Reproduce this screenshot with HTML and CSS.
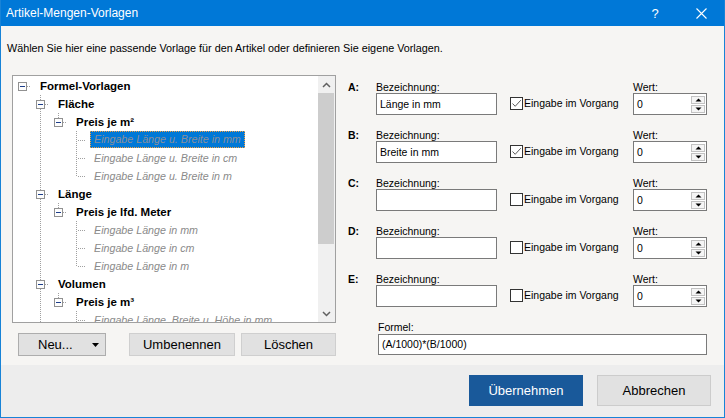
FILE: index.html
```html
<!DOCTYPE html>
<html lang="de">
<head>
<meta charset="utf-8">
<title>Artikel-Mengen-Vorlagen</title>
<link rel="stylesheet" href="styles.css">
</head>
<body>
<svg class="defs" width="0" height="0" aria-hidden="true">
  <defs>
    <symbol id="boxR" viewBox="0 0 18 18">
      <path d="M14 9.5H18" stroke="#a0a0a0" stroke-dasharray="1 1"/>
      <rect x="5.5" y="5.5" width="8" height="8" fill="#fdfdfd" stroke="#919191"/>
      <path d="M7 9.5h5" stroke="#1c3e8a"/>
    </symbol>
    <symbol id="boxUD" viewBox="0 0 18 18">
      <path d="M9.5 0V5M9.5 14V18M14 9.5H18" stroke="#a0a0a0" stroke-dasharray="1 1"/>
      <rect x="5.5" y="5.5" width="8" height="8" fill="#fdfdfd" stroke="#919191"/>
      <path d="M7 9.5h5" stroke="#1c3e8a"/>
    </symbol>
    <symbol id="boxU" viewBox="0 0 18 18">
      <path d="M9.5 0V5M14 9.5H18" stroke="#a0a0a0" stroke-dasharray="1 1"/>
      <rect x="5.5" y="5.5" width="8" height="8" fill="#fdfdfd" stroke="#919191"/>
      <path d="M7 9.5h5" stroke="#1c3e8a"/>
    </symbol>
    <symbol id="vl" viewBox="0 0 18 18">
      <path d="M9.5 0V18" stroke="#a0a0a0" stroke-dasharray="1 1"/>
    </symbol>
    <symbol id="leafM" viewBox="0 0 18 18">
      <path d="M9.5 0V18M11 9.5H18" stroke="#a0a0a0" stroke-dasharray="1 1"/>
    </symbol>
    <symbol id="leafL" viewBox="0 0 18 18">
      <path d="M9.5 0V10M11 9.5H18" stroke="#a0a0a0" stroke-dasharray="1 1"/>
    </symbol>
  </defs>
</svg>

<div class="win">
  <div class="titlebar">
    <span class="title">Artikel-Mengen-Vorlagen</span>
    <span class="tbtn help">?</span>
    <span class="tbtn close">
      <svg width="11" height="11" viewBox="0 0 11 11"><path d="M0.5 0.5L10.5 10.5M10.5 0.5L0.5 10.5" stroke="#fff" stroke-width="1.1"/></svg>
    </span>
  </div>

  <div class="content">
    <div class="desc">Wählen Sie hier eine passende Vorlage für den Artikel oder definieren Sie eigene Vorlagen.</div>
    <div class="main">
      <div class="leftcol">
        <div class="tree">
          <div class="tree-list">
            <div class="node"><svg class="ic"><use href="#boxR"/></svg><span class="lbl b">Formel-Vorlagen</span></div>
            <div class="node"><span class="sp"></span><svg class="ic"><use href="#boxUD"/></svg><span class="lbl b">Fläche</span></div>
            <div class="node"><span class="sp"></span><svg class="ic"><use href="#vl"/></svg><svg class="ic"><use href="#boxU"/></svg><span class="lbl b">Preis je m²</span></div>
            <div class="node"><span class="sp"></span><svg class="ic"><use href="#vl"/></svg><span class="sp"></span><svg class="ic"><use href="#leafM"/></svg><span class="lbl leaf sel">Eingabe Länge u. Breite in mm</span></div>
            <div class="node"><span class="sp"></span><svg class="ic"><use href="#vl"/></svg><span class="sp"></span><svg class="ic"><use href="#leafM"/></svg><span class="lbl leaf">Eingabe Länge u. Breite in cm</span></div>
            <div class="node"><span class="sp"></span><svg class="ic"><use href="#vl"/></svg><span class="sp"></span><svg class="ic"><use href="#leafL"/></svg><span class="lbl leaf">Eingabe Länge u. Breite in m</span></div>
            <div class="node"><span class="sp"></span><svg class="ic"><use href="#boxUD"/></svg><span class="lbl b">Länge</span></div>
            <div class="node"><span class="sp"></span><svg class="ic"><use href="#vl"/></svg><svg class="ic"><use href="#boxU"/></svg><span class="lbl b">Preis je lfd. Meter</span></div>
            <div class="node"><span class="sp"></span><svg class="ic"><use href="#vl"/></svg><span class="sp"></span><svg class="ic"><use href="#leafM"/></svg><span class="lbl leaf">Eingabe Länge in mm</span></div>
            <div class="node"><span class="sp"></span><svg class="ic"><use href="#vl"/></svg><span class="sp"></span><svg class="ic"><use href="#leafM"/></svg><span class="lbl leaf">Eingabe Länge in cm</span></div>
            <div class="node"><span class="sp"></span><svg class="ic"><use href="#vl"/></svg><span class="sp"></span><svg class="ic"><use href="#leafL"/></svg><span class="lbl leaf">Eingabe Länge in m</span></div>
            <div class="node"><span class="sp"></span><svg class="ic"><use href="#boxUD"/></svg><span class="lbl b">Volumen</span></div>
            <div class="node"><span class="sp"></span><svg class="ic"><use href="#vl"/></svg><svg class="ic"><use href="#boxU"/></svg><span class="lbl b">Preis je m³</span></div>
            <div class="node"><span class="sp"></span><svg class="ic"><use href="#vl"/></svg><span class="sp"></span><svg class="ic"><use href="#leafM"/></svg><span class="lbl leaf">Eingabe Länge, Breite u. Höhe in mm</span></div>
          </div>
          <div class="vscroll">
            <div class="arrow"><svg width="9" height="6" viewBox="0 0 9 6"><path d="M1 5L4.5 1.5L8 5" fill="none" stroke="#606060" stroke-width="1.5"/></svg></div>
            <div class="thumb"></div>
            <div class="track"></div>
            <div class="arrow"><svg width="9" height="6" viewBox="0 0 9 6"><path d="M1 1L4.5 4.5L8 1" fill="none" stroke="#606060" stroke-width="1.5"/></svg></div>
          </div>
        </div>
        <div class="treebtns">
          <div class="btn btn-neu"><span>Neu...</span><svg width="7" height="4" viewBox="0 0 7 4"><path d="M0 0H7L3.5 4Z" fill="#000"/></svg></div>
          <div class="btn btn-umb">Umbenennen</div>
          <div class="btn btn-del">Löschen</div>
        </div>
      </div>

      <div class="rightcol">
        <div class="field">
          <span class="letter">A:</span><span class="flabel">Bezeichnung:</span><span class="wlabel">Wert:</span>
          <div class="input">Länge in mm</div>
          <label class="check"><span class="cb"><svg width="11" height="11" viewBox="0 0 11 11"><path d="M1.5 5.5L4.2 8.3L9.8 2.2" fill="none" stroke="#5a5a5a" stroke-width="1"/></svg></span>Eingabe im Vorgang</label>
          <div class="spin"><span class="val">0</span><span class="spbtns"><span class="spb"><svg width="7" height="4" viewBox="0 0 7 4"><path d="M0.5 3.5H6.5L3.5 0.5Z" fill="#000"/></svg></span><span class="spb"><svg width="7" height="4" viewBox="0 0 7 4"><path d="M0.5 0.5H6.5L3.5 3.5Z" fill="#000"/></svg></span></span></div>
        </div>
        <div class="field">
          <span class="letter">B:</span><span class="flabel">Bezeichnung:</span><span class="wlabel">Wert:</span>
          <div class="input">Breite in mm</div>
          <label class="check"><span class="cb"><svg width="11" height="11" viewBox="0 0 11 11"><path d="M1.5 5.5L4.2 8.3L9.8 2.2" fill="none" stroke="#5a5a5a" stroke-width="1"/></svg></span>Eingabe im Vorgang</label>
          <div class="spin"><span class="val">0</span><span class="spbtns"><span class="spb"><svg width="7" height="4" viewBox="0 0 7 4"><path d="M0.5 3.5H6.5L3.5 0.5Z" fill="#000"/></svg></span><span class="spb"><svg width="7" height="4" viewBox="0 0 7 4"><path d="M0.5 0.5H6.5L3.5 3.5Z" fill="#000"/></svg></span></span></div>
        </div>
        <div class="field">
          <span class="letter">C:</span><span class="flabel">Bezeichnung:</span><span class="wlabel">Wert:</span>
          <div class="input"></div>
          <label class="check"><span class="cb"></span>Eingabe im Vorgang</label>
          <div class="spin"><span class="val">0</span><span class="spbtns"><span class="spb"><svg width="7" height="4" viewBox="0 0 7 4"><path d="M0.5 3.5H6.5L3.5 0.5Z" fill="#000"/></svg></span><span class="spb"><svg width="7" height="4" viewBox="0 0 7 4"><path d="M0.5 0.5H6.5L3.5 3.5Z" fill="#000"/></svg></span></span></div>
        </div>
        <div class="field">
          <span class="letter">D:</span><span class="flabel">Bezeichnung:</span><span class="wlabel">Wert:</span>
          <div class="input"></div>
          <label class="check"><span class="cb"></span>Eingabe im Vorgang</label>
          <div class="spin"><span class="val">0</span><span class="spbtns"><span class="spb"><svg width="7" height="4" viewBox="0 0 7 4"><path d="M0.5 3.5H6.5L3.5 0.5Z" fill="#000"/></svg></span><span class="spb"><svg width="7" height="4" viewBox="0 0 7 4"><path d="M0.5 0.5H6.5L3.5 3.5Z" fill="#000"/></svg></span></span></div>
        </div>
        <div class="field">
          <span class="letter">E:</span><span class="flabel">Bezeichnung:</span><span class="wlabel">Wert:</span>
          <div class="input"></div>
          <label class="check"><span class="cb"></span>Eingabe im Vorgang</label>
          <div class="spin"><span class="val">0</span><span class="spbtns"><span class="spb"><svg width="7" height="4" viewBox="0 0 7 4"><path d="M0.5 3.5H6.5L3.5 0.5Z" fill="#000"/></svg></span><span class="spb"><svg width="7" height="4" viewBox="0 0 7 4"><path d="M0.5 0.5H6.5L3.5 3.5Z" fill="#000"/></svg></span></span></div>
        </div>
        <div class="formel">
          <div class="formel-label">Formel:</div>
          <div class="input formel-input">(A/1000)*(B/1000)</div>
        </div>
      </div>
    </div>
  </div>

  <div class="footer">
    <div class="fbtn primary">Übernehmen</div>
    <div class="fbtn">Abbrechen</div>
  </div>
</div>
</body>
</html>
```

FILE: styles.css
```css
* { box-sizing: border-box; }
html, body { margin: 0; padding: 0; }
body {
  font-family: "Liberation Sans", Arial, sans-serif;
  font-size: 11px;
  color: #000;
  background: #fff;
}
.defs { display: block; width: 0; height: 0; overflow: hidden; }

.win {
  width: 725px;
  height: 418px;
  border: 1px solid #1883d7;
  border-top: none;
  background: #f6f5f3;
  display: flex;
  flex-direction: column;
  overflow: hidden;
}

.titlebar {
  height: 26px;
  flex: none;
  background: #0078d7;
  color: #fff;
  display: flex;
  align-items: center;
  padding-left: 5px;
  font-size: 12px;
}
.title { flex: 1; }
.tbtn {
  width: 46px;
  height: 26px;
  display: flex;
  align-items: center;
  justify-content: center;
}
.help { font-size: 13px; }

.content {
  flex: none;
  height: 339px;
  padding: 15px 0 0 6px;
}
.desc {
  line-height: 14px;
  height: 14px;
  margin-bottom: 20px;
  white-space: nowrap;
  font-size: 10.8px;
}
.main {
  display: flex;
  height: 290px;
}
.leftcol {
  width: 324px;
  margin-left: 5px;
  flex: none;
}

.tree {
  width: 324px;
  height: 248px;
  border: 1px solid #a0a0a0;
  background: #fff;
  display: flex;
  overflow: hidden;
}
.tree-list {
  flex: 1;
  padding-top: 1px;
  overflow: hidden;
}
.node {
  display: flex;
  align-items: flex-start;
  height: 18px;
  white-space: nowrap;
}
.ic { width: 18px; height: 18px; flex: none; display: block; }
.sp { width: 18px; height: 18px; flex: none; }
.lbl {
  margin-left: 5px;
  padding: 0 4px;
  line-height: 18px;
  height: 18px;
}
.lbl.b { font-weight: bold; font-size: 11.5px; }
.lbl.leaf { font-style: italic; color: #8a8a8a; font-size: 10.7px; }
.lbl.sel {
  background: #0078d7;
  color: #8a8f99;
  outline: 1px dotted #f5a040;
  outline-offset: -1px;
  height: 17px;
  line-height: 17px;
}

.vscroll {
  width: 17px;
  flex: none;
  background: #f0f0f0;
  display: flex;
  flex-direction: column;
}
.arrow {
  height: 17px;
  display: flex;
  align-items: center;
  justify-content: center;
  flex: none;
}
.thumb {
  height: 151px;
  background: #cdcdcd;
  margin: 0 1px 0 0;
  flex: none;
}
.track { flex: 1; }

.treebtns {
  display: flex;
  margin-top: 10px;
  height: 23px;
}
.btn {
  height: 23px;
  background: #e1e1e1;
  border: 1px solid #cfcfcf;
  display: flex;
  align-items: center;
  justify-content: center;
  font-size: 13px;
}
.btn-neu {
  width: 88px;
  margin-left: 6px;
  border-color: #adadad;
  justify-content: flex-start;
  padding-left: 19px;
}
.btn-neu svg { margin-left: auto; margin-right: 6px; }
.btn-umb { width: 106px; margin-left: 23px; }
.btn-del { width: 95px; margin-left: 6px; }

.rightcol {
  margin-left: 12px;
  padding-top: 6px;
  width: 359px;
  font-size: 10.5px;
}
.field {
  display: grid;
  grid-template-columns: 28px 121px 13px 123px 74px;
  grid-template-rows: 12px 22px;
  margin-bottom: 14px;
}
.letter {
  grid-column: 1;
  grid-row: 1;
  font-weight: bold;
  line-height: 12px;
}
.flabel {
  grid-column: 2;
  grid-row: 1;
  line-height: 12px;
}
.wlabel {
  grid-column: 5;
  grid-row: 1;
  line-height: 12px;
}
.input {
  background: #fff;
  border: 1px solid #7a7a7a;
  height: 22px;
  line-height: 20px;
  padding-left: 3px;
  white-space: nowrap;
}
.field .input {
  grid-column: 2;
  grid-row: 2;
}
.check {
  grid-column: 4;
  grid-row: 2;
  display: flex;
  align-items: center;
  align-self: center;
  margin-top: -2px;
  white-space: nowrap;
}
.cb {
  width: 13px;
  height: 13px;
  border: 1px solid #333;
  background: #fff;
  margin-right: 1px;
  display: flex;
  align-items: center;
  justify-content: center;
  flex: none;
}
.spin {
  grid-column: 5;
  grid-row: 2;
  height: 22px;
  border: 1px solid #7a7a7a;
  background: #fff;
  display: flex;
  align-items: flex-start;
}
.spin .val {
  flex: 1;
  padding-left: 3px;
  line-height: 20px;
}
.spbtns {
  display: flex;
  flex-direction: column;
  margin: 2px 1px 0 0;
}
.spb {
  width: 14px;
  height: 8px;
  border: 1px solid #c2c2c2;
  background: #f5f5f5;
  display: flex;
  align-items: center;
  justify-content: center;
  margin-bottom: 1px;
}

.formel {
  padding-left: 30px;
}
.formel-label {
  line-height: 12px;
  height: 12px;
}
.formel-input {
  margin-top: 1px;
  width: 329px;
  height: 21px;
  line-height: 19px;
}

.footer {
  flex: none;
  height: 52px;
  background: #ededed;
  display: flex;
  justify-content: flex-end;
  padding: 10px 13px 0 0;
  gap: 14px;
}
.fbtn {
  width: 114px;
  height: 31px;
  background: #e1e1e1;
  border: 1px solid #cccccc;
  display: flex;
  align-items: center;
  justify-content: center;
  font-size: 13px;
  color: #000;
}
.fbtn.primary {
  background: #19599a;
  border-color: #19599a;
  color: #fff;
}
```
